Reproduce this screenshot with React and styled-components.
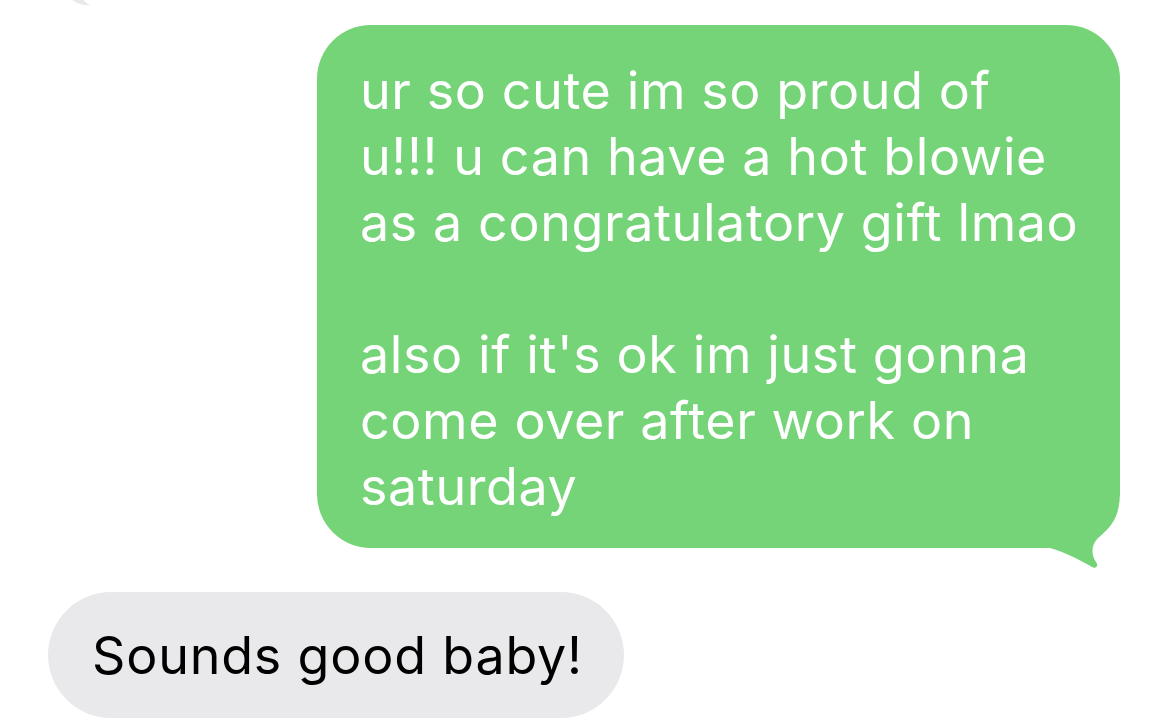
import React from 'react';
import styled, { createGlobalStyle } from 'styled-components';

const GlobalStyle = createGlobalStyle`
    html, body {
        margin: 0;
        padding: 0;
        background: #ffffff;
    }
    body {
        font-family: Inter, "Noto Sans", "Liberation Sans", sans-serif;
        -webkit-font-smoothing: antialiased;
    }
`;

const Thread = styled.main`
    position: relative;
    width: 1170px;
    height: 718px;
    overflow: hidden;
    padding: 25px 50px 0 48px;
    box-sizing: border-box;
    display: flex;
    flex-direction: column;
    gap: 44px;
`;

const PrevTail = styled.svg`
    position: absolute;
    left: 70px;
    top: 0;
`;

const Row = styled.div`
    display: flex;
    justify-content: ${p => (p.$sent ? 'flex-end' : 'flex-start')};
`;

const Bubble = styled.div`
    position: relative;
    box-sizing: border-box;
    font-size: 52px;
    line-height: 66px;
    letter-spacing: ${p => (p.$sent ? '0.6px' : '0.8px')};
    white-space: pre-line;
    background: ${p => (p.$sent ? '#74d477' : '#e9e9eb')};
    color: ${p => (p.$sent ? '#ffffff' : '#000000')};
    border-radius: ${p => (p.$sent ? '54px' : '63px')};
    width: ${p => p.$width}px;
    padding: ${p => (p.$sent ? '33px 30px 28px 43px' : '31px 30px 29px 44px')};
`;

const Tail = styled.svg`
    position: absolute;
    right: 0;
    bottom: -22px;
`;

function Message({ sent, width, children }) {
    return (
        <Row $sent={sent}>
            <Bubble $sent={sent} $width={width}>
                {children}
                {sent && (
                    <Tail width="70" height="70" viewBox="0 0 70 70">
                        <path
                            d="M0 48 C15 52 30 60 42 67 C46 69 49 66 46 62 C41 55 41 45 48 38 C60 28 69 18 69 0 L0 0 Z"
                            fill="#74d477"
                        />
                    </Tail>
                )}
            </Bubble>
        </Row>
    );
}

function App() {
    return (
        <>
            <GlobalStyle />
            <Thread>
                <PrevTail width="30" height="8" viewBox="0 0 30 8">
                    <path d="M2 0 C8 4 14 6 20 5 C16 3 14 1 14 0 Z" fill="#e9e9eb" />
                </PrevTail>
                <Message sent width={803}>
                    {"ur so cute im so proud of\nu!!! u can have a hot blowie\nas a congratulatory gift lmao\n\nalso if it's ok im just gonna\ncome over after work on\nsaturday"}
                </Message>
                <Message width={576}>Sounds good baby!</Message>
            </Thread>
        </>
    );
}

export default App;
